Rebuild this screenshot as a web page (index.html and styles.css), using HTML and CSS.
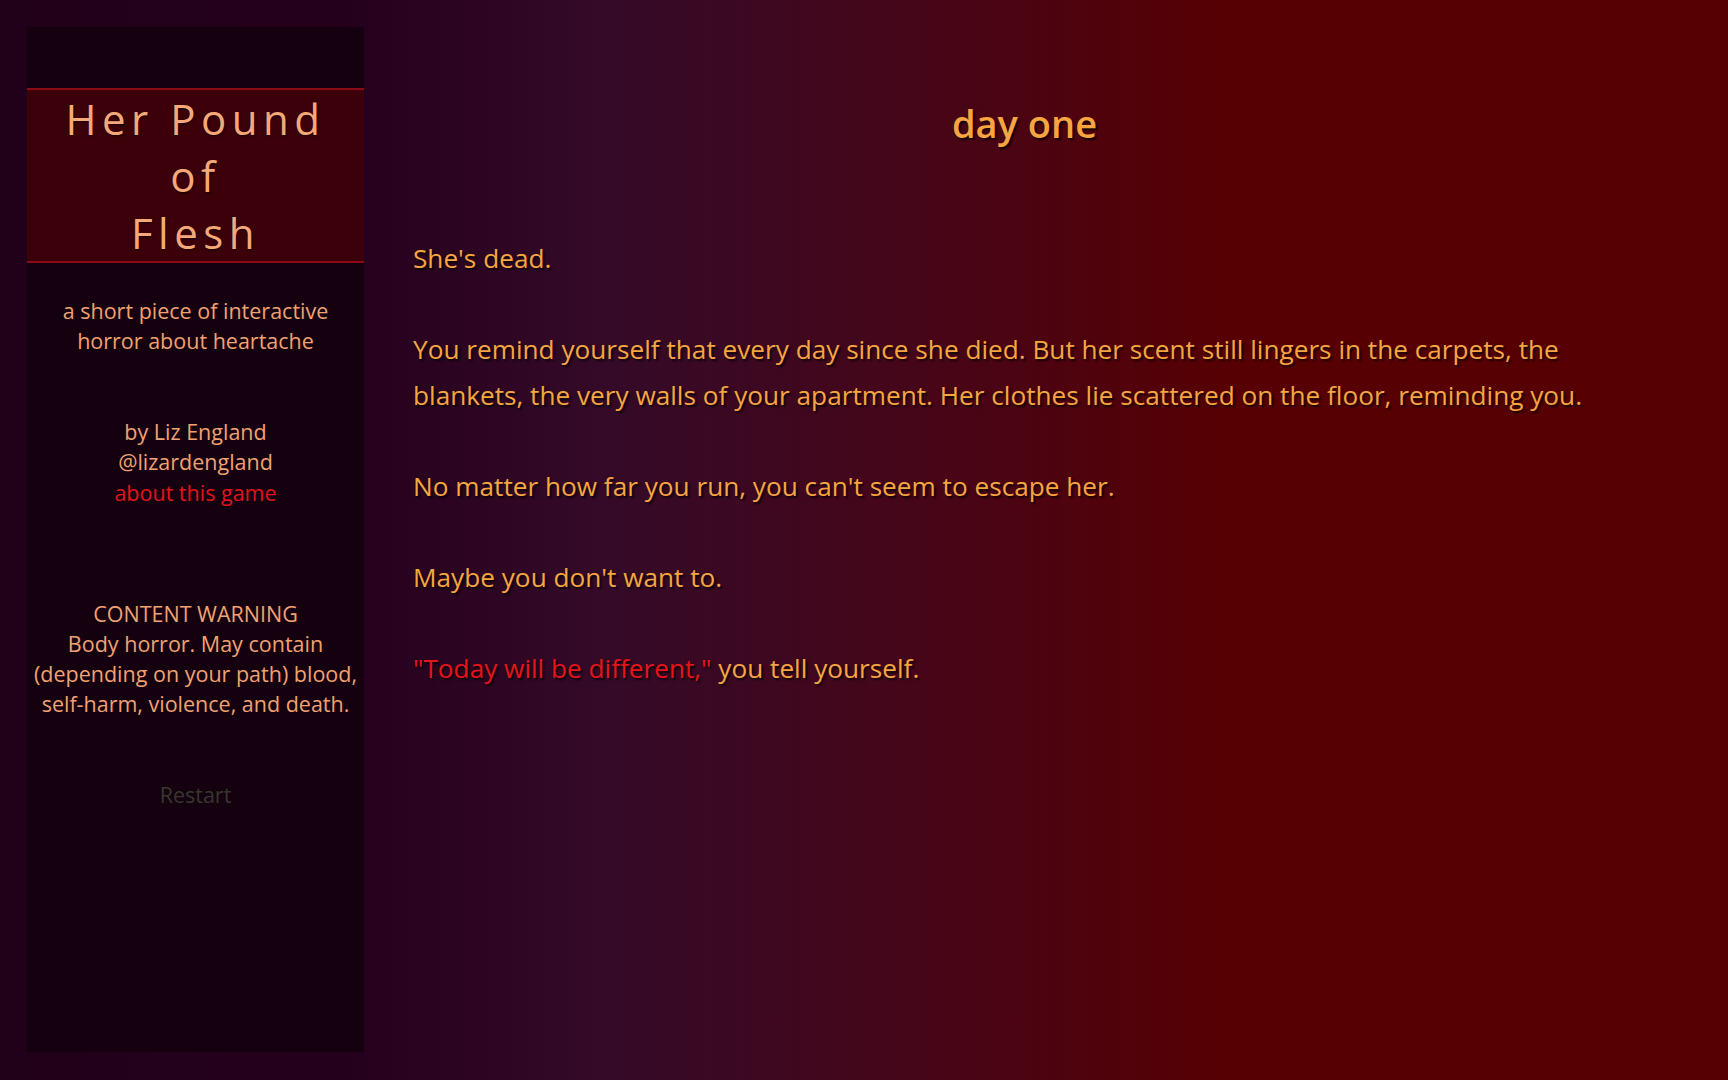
FILE: index.html
```html
<!DOCTYPE html>
<html lang="en">
<head>
    <meta charset="UTF-8">
    <meta name="viewport" content="width=device-width, initial-scale=1.0">
    <title>Her Pound of Flesh</title>
    <link rel="stylesheet" href="styles.css">
</head>
<body>

    <div class="ui-bar">
        <div class="ui-bar-top"></div>
        <h1 class="story-title">Her Pound<br>of<br>Flesh</h1>

        <div class="story-caption">
            a short piece of interactive<br>horror about heartache<br><br><br>
            by Liz England<br>
            @lizardengland<br>
            <a href="#" class="link-internal">about this game</a><br><br><br><br>
            CONTENT WARNING<br>
            Body horror. May contain (depending on your path) blood, self-harm, violence, and death.<br><br><br>
            <span class="restart">Restart</span>
        </div>
    </div>

    <div class="passage">
        <h2 class="passage-title">day one</h2>
        <div class="passage-text">
            She's dead.<br><br>
            You remind yourself that every day since she died. But her scent still lingers in the carpets, the blankets, the very walls of your apartment. Her clothes lie scattered on the floor, reminding you.<br><br>
            No matter how far you run, you can't seem to escape her.<br><br>
            Maybe you don't want to.<br><br>
            <span class="speech">"Today will be different,"</span> you tell yourself.
        </div>
    </div>

</body>
</html>
```

FILE: styles.css
```css
html, body {
    height: 100%;
}

body {
    margin: 0;
    display: flex;
    align-items: flex-start;
    font-family: "Open Sans", "Noto Sans", sans-serif;
    background: linear-gradient(to right, #21001a 0%, #25001c 20%, #340a28 35%, #45061a 52%, #560003 71%, #560003 100%);
    overflow: hidden;
}

/* left story bar */
.ui-bar {
    flex: 0 0 337px;
    height: 1025px;
    margin: 27px 0 0 27px;
    background-color: #150010;
    text-align: center;
}

.ui-bar-top {
    height: 61px;
}

.story-title {
    margin: 0;
    background-color: #3b0009;
    border-top: 2px solid #8c0a16;
    border-bottom: 2px solid #8c0a16;
    color: #f6a878;
    font-size: 42px;
    font-weight: normal;
    line-height: 57px;
    letter-spacing: 5.5px;
    text-shadow: 1px 1px 2px rgba(0, 0, 0, 0.6);
}

.story-caption {
    padding: 33px 2px 0;
    color: #f0a271;
    font-size: 21.5px;
    line-height: 30.25px;
}

.link-internal {
    color: #e1141c;
    text-decoration: none;
}

.restart {
    color: #35382c;
}

/* main passage */
.passage {
    flex: 0 0 1223px;
    margin-left: 49px;
    color: #f6a540;
    text-shadow: 2px 2px 2px rgba(0, 0, 0, 0.75);
}

.passage-title {
    margin: 99px 0 0;
    text-align: center;
    font-size: 38px;
    font-weight: 600;
    line-height: 48px;
}

.passage-text {
    margin-top: 89px;
    font-size: 26.2px;
    line-height: 45.5px;
}

.speech {
    color: #e5141a;
}
```
